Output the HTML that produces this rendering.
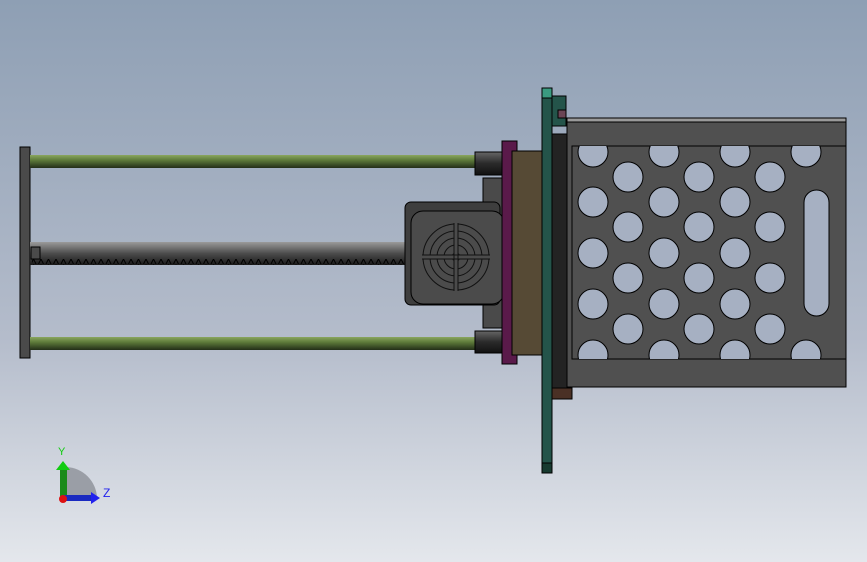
<!DOCTYPE html><html><head><style>html,body{margin:0;padding:0;width:867px;height:562px;overflow:hidden}
body{background:linear-gradient(#8e9fb4 0%,#b4bccb 60%,#e4e7ec 100%)}</style></head><body>
<svg width="867" height="562" xmlns="http://www.w3.org/2000/svg" style="position:absolute;left:0;top:0">
<defs>
<linearGradient id="rod" x1="0" y1="0" x2="0" y2="1"><stop offset="0" stop-color="#8aa65e"/><stop offset=".4" stop-color="#5d7a3a"/><stop offset="1" stop-color="#222e18"/></linearGradient>
<linearGradient id="scr" x1="0" y1="0" x2="0" y2="1"><stop offset="0" stop-color="#9a9a9a"/><stop offset=".5" stop-color="#4c4c4c"/><stop offset="1" stop-color="#1a1a1a"/></linearGradient>
<linearGradient id="cpl" x1="0" y1="0" x2="0" y2="1"><stop offset="0" stop-color="#666"/><stop offset=".5" stop-color="#2a2a2a"/><stop offset="1" stop-color="#111"/></linearGradient>
<pattern id="teeth" x="0" y="0" width="7.5" height="6" patternUnits="userSpaceOnUse"><path d="M1 6 L3.5 1 L6 6" fill="none" stroke="#000" stroke-width="1"/></pattern>
<clipPath id="pc"><rect x="573" y="146" width="273" height="213"/></clipPath>
</defs>
<g stroke="#000" stroke-width="1">
<rect x="20" y="147" width="10" height="211" fill="#4a4a4a"/>
<rect x="30" y="155" width="446" height="13" fill="url(#rod)" stroke="none"/>
<rect x="30" y="337" width="446" height="13" fill="url(#rod)" stroke="none"/>
<rect x="30" y="242" width="380" height="23" fill="url(#scr)" stroke="none"/>
<rect x="32" y="259" width="376" height="6" fill="url(#teeth)" stroke="none"/>
<rect x="31" y="247" width="9" height="12" fill="#4a4a4a"/>
<rect x="475" y="152" width="31" height="23" fill="url(#cpl)"/>
<rect x="475" y="331" width="31" height="22" fill="url(#cpl)"/>
<rect x="483" y="178" width="22" height="150" fill="#4a4a4a"/>
<rect x="405" y="202" width="95" height="103" rx="6" fill="#3e3e3e"/>
<rect x="411" y="211" width="93" height="93" rx="12" fill="#4b4b4b"/>
<g fill="none" stroke="#111"><circle cx="456" cy="257" r="33"/><circle cx="456" cy="257" r="26"/><circle cx="456" cy="257" r="19"/><circle cx="456" cy="257" r="12"/><circle cx="456" cy="257" r="4"/>
<path d="M456 223v68M422 257h68" stroke="#4b4b4b" stroke-width="4"/>
<path d="M454 223v68M458 223v68M422 255h68M422 259h68" stroke="#111"/></g>
<rect x="502" y="141" width="15" height="223" fill="#5a1a4a"/>
<rect x="512" y="151" width="31" height="204" fill="#564a35"/>
<rect x="552" y="134" width="15" height="259" fill="#232323"/>
<rect x="552" y="388" width="20" height="11" fill="#4a3025"/>
<rect x="552" y="96" width="14" height="30" fill="#24544a"/>
<rect x="558" y="110" width="8" height="8" fill="#6a4555"/>
<rect x="567" y="118" width="279" height="269" fill="#505050"/>
<rect x="567" y="118" width="279" height="4" fill="#9a9a9a"/>
<rect x="572" y="146" width="274" height="213" fill="#505050"/>
<g fill="#a6b0c2" clip-path="url(#pc)">
<g id="c0"><circle cx="593" cy="152" r="15"/><circle cx="593" cy="202" r="15"/><circle cx="593" cy="253" r="15"/><circle cx="593" cy="304" r="15"/><circle cx="593" cy="355" r="15"/></g>
<g id="c1"><circle cx="628" cy="177" r="15"/><circle cx="628" cy="227" r="15"/><circle cx="628" cy="278" r="15"/><circle cx="628" cy="329" r="15"/></g>
<use href="#c0" x="71"/><use href="#c1" x="71"/><use href="#c0" x="142"/><use href="#c1" x="142"/>
<circle cx="806" cy="152" r="15"/><circle cx="806" cy="355" r="15"/>
</g>
<rect x="804" y="190" width="25" height="126" rx="12.5" fill="#a6b0c2"/>
<rect x="542" y="88" width="10" height="385" fill="#24544a"/>
<rect x="542" y="88" width="10" height="10" fill="#3a9a80"/>
<rect x="542" y="463" width="10" height="10" fill="#173a30"/>
</g>
<path d="M66 467 A32 32 0 0 1 97 498 L66 498Z" fill="#9a9ea6"/>
<rect x="60" y="467" width="7" height="32" fill="#1a8a1a"/>
<path d="M56 470 L63 461 L70 470Z" fill="#1c1"/>
<rect x="62" y="495" width="30" height="6" fill="#1a2ac0"/>
<path d="M91 492 L100 498 L91 504Z" fill="#22e"/>
<circle cx="63" cy="499" r="4" fill="#d11"/>
<text x="58" y="455" font-family="Liberation Sans,sans-serif" font-size="11" fill="#1c1">Y</text>
<text x="103" y="497" font-family="Liberation Sans,sans-serif" font-size="12" fill="#22e">Z</text>
</svg></body></html>
